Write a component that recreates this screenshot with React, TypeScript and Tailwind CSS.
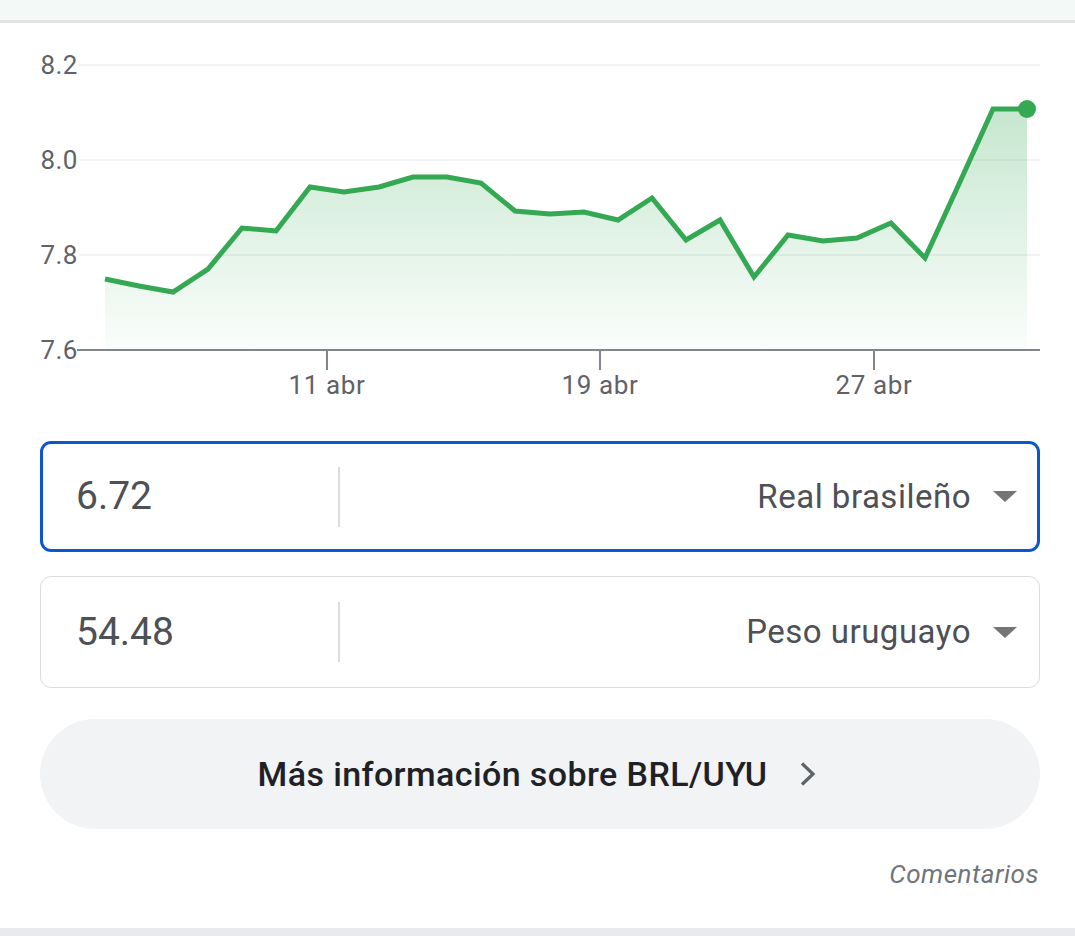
import React from "react";

const pts: [number, number][] = [
  [105, 279], [139, 286], [173, 292], [208, 269], [242, 228], [276, 231],
  [310, 187], [344, 192], [379, 187], [413, 177], [447, 177], [481, 183],
  [515, 211], [550, 214], [584, 212], [618, 220], [652, 198], [686, 240],
  [720, 220], [754, 277], [788, 235], [823, 241], [857, 238], [891, 223],
  [925, 258], [959, 184], [993, 109], [1027, 109],
];

function Chart() {
  const line = pts.map((p, i) => `${i === 0 ? "M" : "L"}${p[0]} ${p[1]}`).join(" ");
  const area = `${line} L1027 350 L105 350 Z`;
  const yLabels: [string, number][] = [["8.2", 65], ["8.0", 160], ["7.8", 255], ["7.6", 350]];
  const xTicks: [string, number][] = [["11 abr", 327], ["19 abr", 600], ["27 abr", 874]];
  return (
    <svg width="1075" height="395" viewBox="0 23 1075 395" className="block" style={{ fontFamily: "Roboto, 'Noto Sans', sans-serif" }}>
      <defs>
        <linearGradient id="fillg" x1="0" y1="109" x2="0" y2="350" gradientUnits="userSpaceOnUse">
          <stop offset="0" stopColor="#34a853" stopOpacity="0.28" />
          <stop offset="1" stopColor="#34a853" stopOpacity="0.02" />
        </linearGradient>
      </defs>
      {yLabels.slice(0, 3).map(([, y]) => (
        <line key={y} x1="79" x2="1040" y1={y} y2={y} stroke="#f1f3f4" strokeWidth="2" />
      ))}
      <path d={area} fill="url(#fillg)" />
      <path d={line} fill="none" stroke="#34a853" strokeWidth="5" strokeLinejoin="miter" />
      <circle cx="1027" cy="109" r="9" fill="#34a853" />
      <line x1="77" x2="1040" y1="350" y2="350" stroke="#80868b" strokeWidth="2" />
      {xTicks.map(([t, x]) => (
        <g key={t}>
          <line x1={x} x2={x} y1="350" y2="370" stroke="#80868b" strokeWidth="2" />
          <text x={x} y="394" textAnchor="middle" fontSize="26" letterSpacing="0.6" fill="#5f6368">{t}</text>
        </g>
      ))}
      {yLabels.map(([t, y]) => (
        <text key={t} x="78" y={y + 9} textAnchor="end" fontSize="26" letterSpacing="0.5" fill="#5f6368">{t}</text>
      ))}
    </svg>
  );
}

function Caret() {
  return (
    <svg width="24" height="11" viewBox="0 0 24 11" className="shrink-0">
      <path d="M0 0 L24 0 L12 11 Z" fill="#757575" />
    </svg>
  );
}

export default function App() {
  return (
    <div className="w-[1075px] h-[936px] bg-white overflow-hidden flex flex-col" style={{ fontFamily: "Roboto, 'Noto Sans', sans-serif" }}>
      <div className="h-[20px] bg-[#f3f9f7] shrink-0" />
      <div className="h-[3px] bg-[#dfe4e2] shrink-0" />
      <Chart />
      <div className="pl-[40px] pr-[35px] flex flex-col">
        <div className="mt-[23px] h-[111px] border-[3px] border-[#0b57d0] rounded-[11px] flex items-center">
          <div className="w-[297px] h-[60px] flex items-center pl-[33px] border-r-2 border-[#dadce0] text-[39px] text-[#4d5156]">6.72</div>
          <div className="flex-1 flex items-center justify-end gap-[22px] pr-[20px]">
            <span className="text-[33px] tracking-[0.5px] text-[#4d5156]">Real brasileño</span>
            <Caret />
          </div>
        </div>
        <div className="mt-[24px] h-[112px] border border-[#dadce0] rounded-[11px] flex items-center">
          <div className="w-[299px] h-[60px] flex items-center pl-[35px] border-r-2 border-[#dadce0] text-[39px] text-[#4d5156]">54.48</div>
          <div className="flex-1 flex items-center justify-end gap-[22px] pr-[22px]">
            <span className="text-[33px] tracking-[0.5px] text-[#4d5156]">Peso uruguayo</span>
            <Caret />
          </div>
        </div>
        <div className="mt-[31px] h-[110px] rounded-full bg-[#f1f3f4] flex items-center justify-center gap-[33px] pr-[6px]">
          <span className="text-[34px] font-medium text-[#202124] tracking-[0.4px]">Más información sobre BRL/UYU</span>
          <svg width="16" height="24" viewBox="0 0 16 24">
            <path d="M2 1.5 L13 12 L2 22.5" fill="none" stroke="#5f6368" strokeWidth="3.2" />
          </svg>
        </div>
        <div className="mt-[30px] text-right text-[26px] italic text-[#70757a] leading-[30px] tracking-[0.5px] pr-[1px]">Comentarios</div>
      </div>
      <div className="flex-1" />
      <div className="h-[8px] bg-[#e8eaed] shrink-0" />
    </div>
  );
}
